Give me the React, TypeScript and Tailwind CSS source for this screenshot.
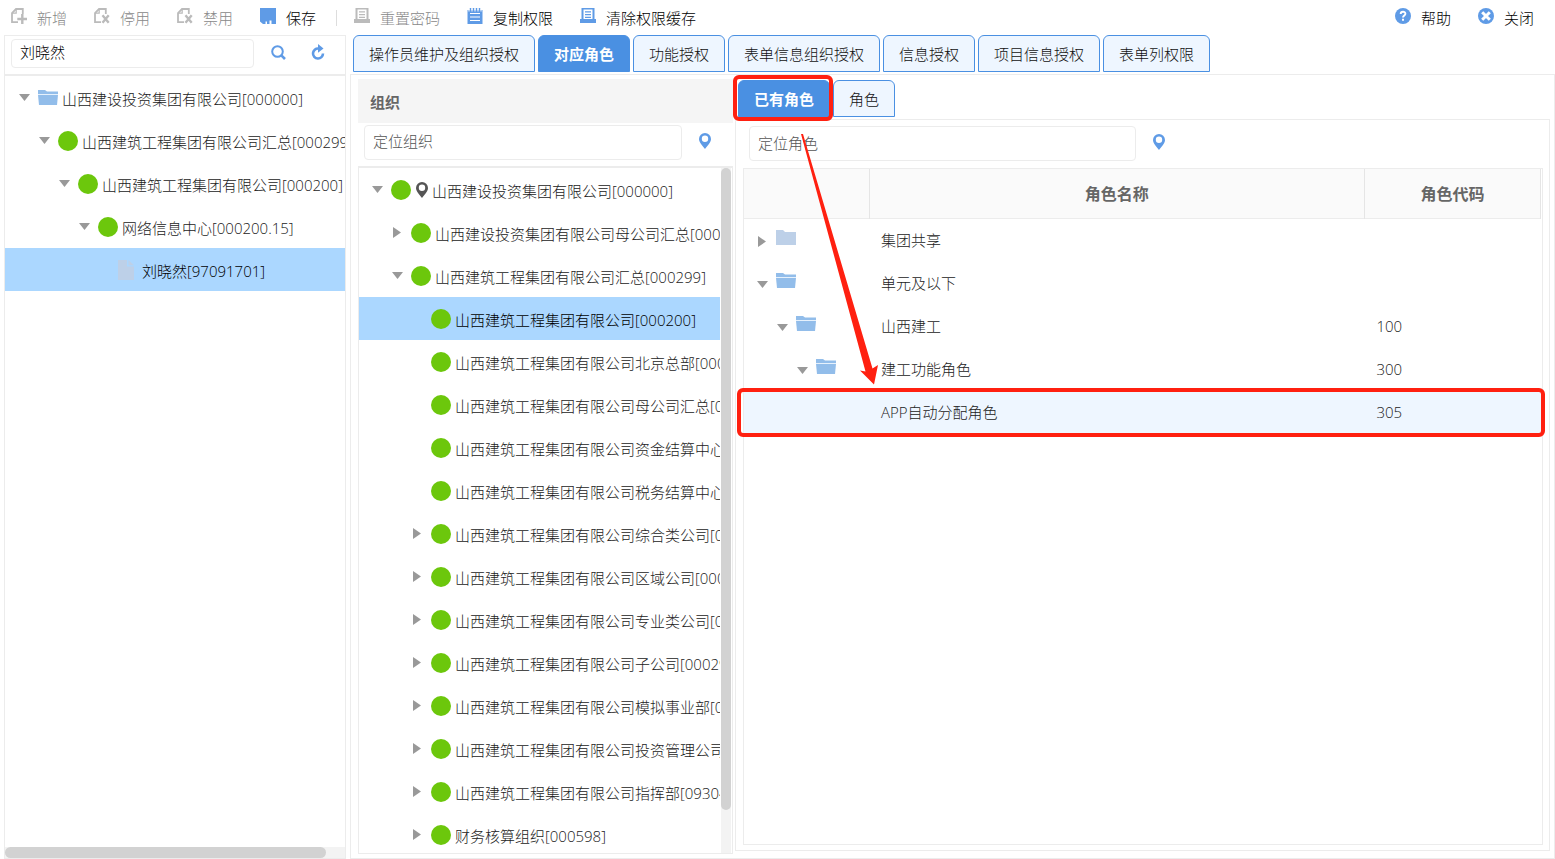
import React from "react";

type NodeIcon = "folder" | "dot" | "file" | "none";

interface TreeNode {
  label: string;
  level: number;
  state: "open" | "closed" | "leaf";
  icon: NodeIcon;
  pin?: boolean;
  selected?: boolean;
}

const userTree: TreeNode[] = [
  { label: "山西建设投资集团有限公司[000000]", level: 0, state: "open", icon: "folder" },
  { label: "山西建筑工程集团有限公司汇总[000299]", level: 1, state: "open", icon: "dot" },
  { label: "山西建筑工程集团有限公司[000200]", level: 2, state: "open", icon: "dot" },
  { label: "网络信息中心[000200.15]", level: 3, state: "open", icon: "dot" },
  { label: "刘晓然[97091701]", level: 4, state: "leaf", icon: "file", selected: true },
];

const orgTree: TreeNode[] = [
  { label: "山西建设投资集团有限公司[000000]", level: 0, state: "open", icon: "dot", pin: true },
  { label: "山西建设投资集团有限公司母公司汇总[000001]", level: 1, state: "closed", icon: "dot" },
  { label: "山西建筑工程集团有限公司汇总[000299]", level: 1, state: "open", icon: "dot" },
  { label: "山西建筑工程集团有限公司[000200]", level: 2, state: "leaf", icon: "dot", selected: true },
  { label: "山西建筑工程集团有限公司北京总部[000201]", level: 2, state: "leaf", icon: "dot" },
  { label: "山西建筑工程集团有限公司母公司汇总[000202]", level: 2, state: "leaf", icon: "dot" },
  { label: "山西建筑工程集团有限公司资金结算中心[000203]", level: 2, state: "leaf", icon: "dot" },
  { label: "山西建筑工程集团有限公司税务结算中心[000204]", level: 2, state: "leaf", icon: "dot" },
  { label: "山西建筑工程集团有限公司综合类公司[000205]", level: 2, state: "closed", icon: "dot" },
  { label: "山西建筑工程集团有限公司区域公司[000206]", level: 2, state: "closed", icon: "dot" },
  { label: "山西建筑工程集团有限公司专业类公司[000207]", level: 2, state: "closed", icon: "dot" },
  { label: "山西建筑工程集团有限公司子公司[000298]", level: 2, state: "closed", icon: "dot" },
  { label: "山西建筑工程集团有限公司模拟事业部[000208]", level: 2, state: "closed", icon: "dot" },
  { label: "山西建筑工程集团有限公司投资管理公司[000209]", level: 2, state: "closed", icon: "dot" },
  { label: "山西建筑工程集团有限公司指挥部[093040]", level: 2, state: "closed", icon: "dot" },
  { label: "财务核算组织[000598]", level: 2, state: "closed", icon: "dot" },
];

const roles = [
  { name: "集团共享", code: "", level: 0, state: "closed" },
  { name: "单元及以下", code: "", level: 0, state: "open" },
  { name: "山西建工", code: "100", level: 1, state: "open" },
  { name: "建工功能角色", code: "300", level: 2, state: "open" },
  { name: "APP自动分配角色", code: "305", level: 3, state: "leaf" },
];

const mainTabs = [
  "操作员维护及组织授权",
  "对应角色",
  "功能授权",
  "表单信息组织授权",
  "信息授权",
  "项目信息授权",
  "表单列权限",
];

/* ---------- icons ---------- */

const PageIcon: React.FC<{ mark: "plus" | "cross" }> = ({ mark }) => (
  <svg width="16" height="16" viewBox="0 0 16 16" fill="none" stroke="currentColor">
    <path d="M7 14.2H1V5l4-4h6.8v5" strokeWidth="1.8" />
    <path d="M1 5.2h4.2V1" strokeWidth="1.2" />
    {mark === "plus" ? (
      <path d="M11.3 6v10M6.3 11h10" strokeWidth="2.4" />
    ) : (
      <path d="M8.500 7.300l6.200 7.400M14.700 7.300l-6.200 7.400" strokeWidth="2.400" />
    )}
  </svg>
);

const SaveIcon = () => (
  <svg width="16" height="16" viewBox="0 0 16 16" fill="currentColor">
    <path d="M0 0h16v16h-4.500v-3.500H9.500V16H7v-2.500H5.500V16H3l-3-2.500z" />
  </svg>
);

const StampIcon = () => (
  <svg width="16" height="16" viewBox="0 0 16 16" fill="currentColor">
    <path d="M1.500 0h13v11H16v4H0v-4h1.500zM3.500 1.600V11h9V1.600z" fillRule="evenodd" />
    <path d="M5 3.200h6v1.300H5zM5 6h6v1.300H5zM5 8.700h6V10H5z" />
  </svg>
);

const NoteIcon = () => (
  <svg width="16" height="16" viewBox="0 0 16 16">
    <path d="M.5 2h15v14H.5z" fill="currentColor" />
    <path d="M3.500 0v3M6.500 0v3M9.500 0v3M12.500 0v3" stroke="currentColor" strokeWidth="1.500" />
    <path d="M3 5.500h10M3 9h10M3 12.500h10" stroke="#fff" strokeWidth="1.200" />
    <path d="M2 1.500v2M5 1.500v2M8 1.500v2M11 1.500v2M14 1.500v2" stroke="#fff" strokeWidth="1" />
  </svg>
);

const HelpIcon = () => (
  <svg width="16" height="16" viewBox="0 0 16 16" fill="none" stroke="#fff">
    <circle cx="8" cy="8" r="8" fill="currentColor" stroke="none" />
    <path d="M5.700 6c0-3 4.700-3 4.700-.3C10.400 7.500 8 7.500 8 9.600" strokeWidth="1.900" />
    <path d="M8 10.800v2" strokeWidth="2" />
  </svg>
);

const CloseIcon = () => (
  <svg width="16" height="16" viewBox="0 0 16 16">
    <circle cx="8" cy="8" r="8" fill="currentColor" />
    <path d="M4.200 4.200l7.600 7.600M11.800 4.200l-7.600 7.600" stroke="#fff" strokeWidth="3" />
  </svg>
);

const SearchIcon = () => (
  <svg width="15" height="15" viewBox="0 0 15 15" fill="none" stroke="currentColor">
    <circle cx="6.500" cy="6.500" r="5.300" strokeWidth="2" />
    <path d="M10.300 10.300l3.700 3.700" strokeWidth="2.600" />
  </svg>
);

const RefreshIcon = () => (
  <svg width="14" height="16" viewBox="0 0 14 16">
    <path d="M7.500 4.500A5 5 0 1 0 12 9.500" fill="none" stroke="currentColor" strokeWidth="2.600" />
    <path d="M7 0l5.500 4.600L7 8.800z" fill="currentColor" />
  </svg>
);

const PinIcon = () => (
  <svg width="12" height="16" viewBox="0 0 12 16" fill="currentColor">
    <path
      d="M6 0a6 6 0 0 1 6 6c0 3.300-3.500 6.800-6 10C3.500 12.800 0 9.300 0 6a6 6 0 0 1 6-6zm0 2.600a3.200 3.200 0 1 0 0 6.400 3.200 3.200 0 0 0 0-6.400z"
      fillRule="evenodd"
    />
  </svg>
);

const FolderIcon: React.FC<{ open?: boolean }> = ({ open }) =>
  open ? (
    <svg className="shrink-0" width="20" height="15" viewBox="0 0 20 15" fill="#92bdea">
      <path d="M0 0h7l2 1.500h11V4H0z" />
      <path d="M0 5h20l-1 10H1z" />
      <path d="M0 4h20v1H0z" fill="#e6f1fc" />
    </svg>
  ) : (
    <svg className="shrink-0" width="20" height="15" viewBox="0 0 20 15" fill="#bdd0e8">
      <path d="M0 0h7l2 2h11v13H0z" />
    </svg>
  );

const FileIcon = () => (
  <svg className="shrink-0" width="16" height="20" viewBox="0 0 16 20" fill="#bdd0e8">
    <path d="M0 0h9v6.500h7V20H0z" />
    <path d="M10.500 0L16 5.300h-5.500z" />
  </svg>
);

const Toggle: React.FC<{ state: string }> = ({ state }) => {
  if (state === "leaf") return <span className="w-5 shrink-0" />;
  return (
    <button
      type="button"
      aria-label={state === "open" ? "收起" : "展开"}
      className="flex h-5 w-5 shrink-0 items-center justify-center"
    >
      {state === "open" ? (
        <svg width="11" height="7" viewBox="0 0 11 7">
          <path d="M0 0h11L5.500 7z" fill="#999" />
        </svg>
      ) : (
        <svg width="8" height="11" viewBox="0 0 8 11">
          <path d="M0 0v11l8-5.500z" fill="#999" />
        </svg>
      )}
    </button>
  );
};

/* ---------- pieces ---------- */

const ToolButton: React.FC<{
  icon: React.ReactNode;
  label: string;
  disabled?: boolean;
}> = ({ icon, label, disabled }) => (
  <button
    type="button"
    disabled={disabled}
    className="group flex items-start gap-[10px] text-black disabled:text-[#888]"
  >
    <span className="text-[#5f9be6] group-disabled:text-[#bbb]">{icon}</span>
    <span>{label}</span>
  </button>
);

const Tab: React.FC<{ label: string; active?: boolean }> = ({ label, active }) => (
  <button
    type="button"
    role="tab"
    aria-selected={active ? true : false}
    className={
      active
        ? "h-[37px] rounded-t-md border border-[#4a90e2] bg-[#4a90e2] px-[15px] font-bold text-white"
        : "h-[37px] rounded-t-md border border-[#4a90e2] bg-[#eef6ff] px-[15px] text-[#111]"
    }
  >
    {label}
  </button>
);

const TreeRow: React.FC<{ node: TreeNode; inset: number }> = ({ node, inset }) => (
  <li
    role="treeitem"
    aria-selected={node.selected ? true : false}
    className={
      node.selected
        ? "flex h-[43px] items-center gap-1 bg-[#abd7ff] whitespace-nowrap text-black"
        : "flex h-[43px] items-center gap-1 whitespace-nowrap text-[#222]"
    }
    style={{ paddingLeft: inset + node.level * 20 }}
  >
    <Toggle state={node.state} />
    {node.icon === "folder" && <FolderIcon open />}
    {node.icon === "dot" && <span className="h-5 w-5 shrink-0 rounded-full bg-[#6cc70c]" />}
    {node.icon === "file" && (
      <span className="w-5 shrink-0">
        <FileIcon />
      </span>
    )}
    {node.pin && (
      <span className="w-[13px] shrink-0 pl-px text-[#555]">
        <PinIcon />
      </span>
    )}
    <span className="pt-[2px]">{node.label}</span>
  </li>
);

const Toolbar = () => (
  <header className="flex h-[35px] shrink-0 items-start pt-2 pr-[21px] pl-[11px]">
    <div className="flex gap-[27px]">
      <ToolButton icon={<PageIcon mark="plus" />} label="新增" disabled />
      <ToolButton icon={<PageIcon mark="cross" />} label="停用" disabled />
      <ToolButton icon={<PageIcon mark="cross" />} label="禁用" disabled />
      <ToolButton icon={<SaveIcon />} label="保存" />
    </div>
    <span className="mt-[2px] mr-[17px] ml-5 h-4 w-px bg-[#ddd]" />
    <div className="flex gap-[27px]">
      <ToolButton icon={<StampIcon />} label="重置密码" disabled />
      <ToolButton icon={<NoteIcon />} label="复制权限" />
      <ToolButton icon={<StampIcon />} label="清除权限缓存" />
    </div>
    <div className="ml-auto flex gap-[27px]">
      <ToolButton icon={<HelpIcon />} label="帮助" />
      <ToolButton icon={<CloseIcon />} label="关闭" />
    </div>
  </header>
);

const UserPanel = () => (
  <aside className="ml-1 flex w-[342px] shrink-0 flex-col border border-[#ececec]">
    <div className="flex h-10 shrink-0 items-start border-b-2 border-[#ececec] pt-[3px] pl-[6px] text-[#5f9be6]">
      <input
        type="text"
        aria-label="搜索用户"
        defaultValue="刘晓然"
        className="h-[29px] w-[243px] rounded border border-[#ececec] px-2 pb-1 text-black outline-none"
      />
      <button type="button" aria-label="搜索" className="mt-[6px] ml-[17px]">
        <SearchIcon />
      </button>
      <button type="button" aria-label="刷新" className="mt-[5px] ml-[25px]">
        <RefreshIcon />
      </button>
    </div>
    <ul role="tree" className="min-h-0 flex-1 overflow-hidden">
      {userTree.map((node) => (
        <TreeRow key={node.label} node={node} inset={9} />
      ))}
    </ul>
    <div className="h-[11px] shrink-0 bg-[#f3f3f3]">
      <div className="h-full w-[321px] rounded-full bg-[#d2d2d2]" />
    </div>
  </aside>
);

const OrgPanel = () => (
  <section className="mt-1 mb-1 ml-[7px] flex w-[375px] shrink-0 flex-col">
    <h2 className="flex h-11 shrink-0 items-center bg-[#f5f5f5] pt-[2px] pl-3 font-bold text-[#666]">组织</h2>
    <div className="flex h-[43px] shrink-0 items-start pt-[2px] pl-[6px]">
      <input
        type="text"
        aria-label="定位组织"
        placeholder="定位组织"
        className="h-[35px] w-[318px] rounded border border-[#ececec] px-2 pb-1 outline-none placeholder:text-[#555]"
      />
      <button type="button" aria-label="定位" className="mt-2 ml-[17px] text-[#5f9be6]">
        <PinIcon />
      </button>
    </div>
    <div className="flex min-h-0 flex-1 border border-t-2 border-[#ececec]">
      <ul role="tree" className="min-w-0 flex-1 overflow-hidden">
        {orgTree.map((node) => (
          <TreeRow key={node.label} node={node} inset={8} />
        ))}
      </ul>
      <div className="mr-px ml-px w-[10px] bg-[#f3f3f3]">
        <div className="h-[642px] rounded-full bg-[#d2d2d2]" />
      </div>
    </div>
  </section>
);

const RoleTable = () => (
  <table className="w-full table-fixed border-collapse text-left">
    <colgroup>
      <col className="w-[125px]" />
      <col />
      <col className="w-[176px]" />
    </colgroup>
    <thead className="bg-[#fafafa] text-base text-[#666]">
      <tr className="h-[49px] border-b border-[#ececec]">
        <th className="border-r border-[#e5e5e5]" aria-label="层级" />
        <th className="border-r border-[#e5e5e5] pt-[2px] text-center font-bold">角色名称</th>
        <th className="border-r border-[#e5e5e5] pt-[2px] text-center font-bold">角色代码</th>
      </tr>
    </thead>
    <tbody>
      {roles.map((role) => (
        <tr
          key={role.name}
          className={role.state === "leaf" ? "h-[43px] bg-[#eef6ff] text-[#222]" : "h-[43px] text-[#222]"}
        >
          <td className="px-0 pt-[3px] pb-0">
            <div
              className="flex items-center gap-1"
              style={{ paddingLeft: 8 + role.level * 20 }}
            >
              <Toggle state={role.state} />
              {role.state !== "leaf" && (
                <span className="pb-[7px]">
                  <FolderIcon open={role.state === "open"} />
                </span>
              )}
            </div>
          </td>
          <td className="py-0 pr-0 pl-3">{role.name}</td>
          <td className="py-0 pr-0 pl-3">{role.code}</td>
        </tr>
      ))}
    </tbody>
  </table>
);

const RolePanel = () => (
  <section className="relative mr-1 mb-[7px] ml-[2px] flex min-w-0 flex-1 flex-col pt-[5px]">
    <div role="tablist" className="flex shrink-0 gap-[3px] pl-[3px]">
      <Tab label="已有角色" active />
      <Tab label="角色" />
    </div>
    <div className="mt-[2px] flex min-h-0 flex-1 flex-col border border-[#ececec]">
      <div className="flex h-12 shrink-0 items-start pt-[6px] pl-[13px]">
        <input
          type="text"
          aria-label="定位角色"
          placeholder="定位角色"
          className="h-[35px] w-[387px] rounded border border-[#ececec] px-2 pb-[2px] outline-none placeholder:text-[#555]"
        />
        <button type="button" aria-label="定位" className="mt-2 ml-[17px] text-[#5f9be6]">
          <PinIcon />
        </button>
      </div>
      <div className="mr-[6px] mb-[5px] ml-[7px] min-h-0 flex-1 border border-[#ececec] pr-px">
        <RoleTable />
      </div>
    </div>

    {/* Red callouts over the tab and the assigned role */}
    <div className="pointer-events-none absolute top-0 -left-[2px] h-[46px] w-[100px] rounded-md border-4 border-[#ff2010]" />
    <div className="pointer-events-none absolute top-[313px] right-[5px] left-[2px] h-[49px] rounded-md border-4 border-[#ff2010]" />
    <svg
      className="pointer-events-none absolute top-[59px] left-[66px]"
      width="80"
      height="252"
      viewBox="0 0 80 252"
      fill="#ff2010"
    >
      <path d="M0 0h2L71.500 234.500 77 231 73 250.500 59 236.500 64.500 237.500z" />
    </svg>
  </section>
);

const App: React.FC = () => {
  return (
    <div className="flex h-screen flex-col overflow-hidden bg-white font-['Open_Sans','Noto_Sans_CJK_SC',sans-serif] text-[15px] leading-5 font-light">
      <Toolbar />
      <div className="flex min-h-0 flex-1">
        <UserPanel />
        <main className="ml-1 flex min-w-0 flex-1 flex-col">
          <div role="tablist" className="flex shrink-0 gap-[3px] pl-[3px]">
            {mainTabs.map((label) => (
              <Tab key={label} label={label} active={label === "对应角色"} />
            ))}
          </div>
          <div className="mt-[2px] flex min-h-0 flex-1 border border-[#ececec]">
            <OrgPanel />
            <RolePanel />
          </div>
        </main>
      </div>
    </div>
  );
};

export default App;
